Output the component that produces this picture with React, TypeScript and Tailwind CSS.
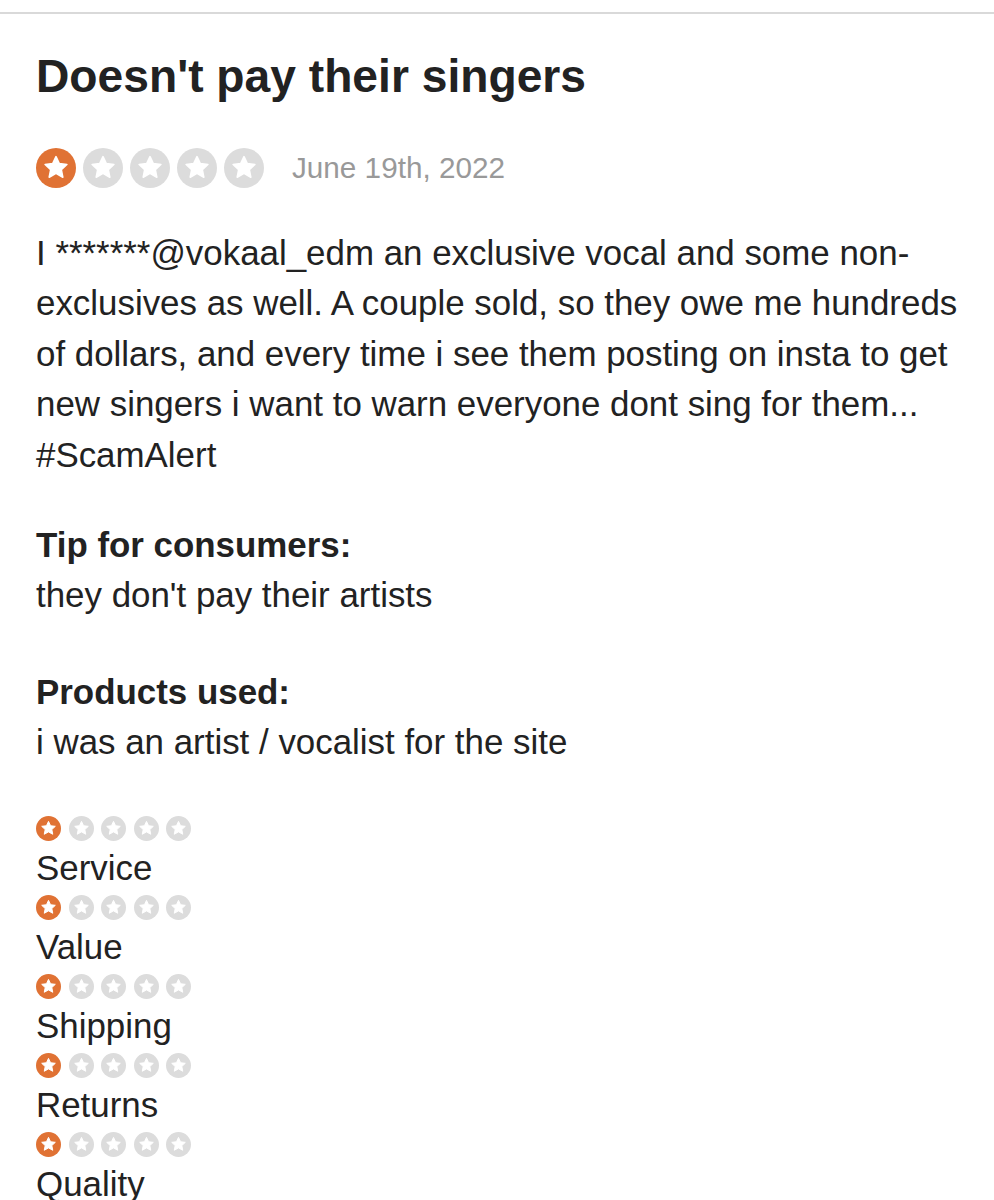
import React from 'react';

const ORANGE = '#e07234';

function Star({ size, filled }: { size: number; filled: boolean }) {
  return (
    <svg width={size} height={size} viewBox="0 0 40 40" className="shrink-0">
      <circle cx="20" cy="20" r="20" fill={filled ? ORANGE : '#dcdcdc'} />
      <path
        d="M20 8.6 L23.3 15.6 L30.9 16.5 L25.3 21.7 L26.8 29.2 L20 25.4 L13.2 29.2 L14.7 21.7 L9.1 16.5 L16.7 15.6 Z"
        fill="#fff"
        stroke="#fff"
        strokeWidth="1.6"
        strokeLinejoin="round"
      />
    </svg>
  );
}

function Stars({ size, gap, value }: { size: number; gap: string; value: number }) {
  return (
    <div className={`flex items-center ${gap}`}>
      {[1, 2, 3, 4, 5].map((i) => (
        <Star key={i} size={size} filled={i <= value} />
      ))}
    </div>
  );
}

const ratings = ['Service', 'Value', 'Shipping', 'Returns', 'Quality'];

export default function App() {
  return (
    <div className="min-h-screen bg-white font-['Liberation_Sans',Arial,Helvetica,sans-serif] text-[#222]">
      <div className="pt-3">
        <div className="h-[2px] bg-[#d9d9d9]" />
      </div>

      <div className="pl-[36px] pr-[28px]">
        <h1 className="mt-[34px] text-[46.2px] font-bold leading-[56px]">Doesn't pay their singers</h1>

        <div className="mt-[42px] flex items-center">
          <Stars size={40} gap="gap-[7px]" value={1} />
          <span className="ml-[28px] text-[29.7px] text-[#999]">June 19th, 2022</span>
        </div>

        <p className="mt-[37px] text-[34.9px] leading-[50.5px]">
          I *******@vokaal_edm an exclusive vocal and some non-exclusives as well. A couple sold, so they owe me
          hundreds of dollars, and every time i see them posting on insta to get new singers i want to warn everyone
          dont sing for them... #ScamAlert
        </p>

        <div className="mt-[40px] text-[34.9px] leading-[50px]">
          <div className="font-bold">Tip for consumers:</div>
          <div>they don't pay their artists</div>
        </div>

        <div className="mt-[47px] text-[34.9px] leading-[50px]">
          <div className="font-bold">Products used:</div>
          <div>i was an artist / vocalist for the site</div>
        </div>

        <div className="mt-[47px] flex flex-col">
          {ratings.map((r) => (
            <div key={r} className="flex flex-col">
              <div className="flex h-[29px] items-center">
                <Stars size={25} gap="gap-[7.5px]" value={1} />
              </div>
              <div className="text-[34.9px] leading-[50px]">{r}</div>
            </div>
          ))}
        </div>
      </div>
    </div>
  );
}
